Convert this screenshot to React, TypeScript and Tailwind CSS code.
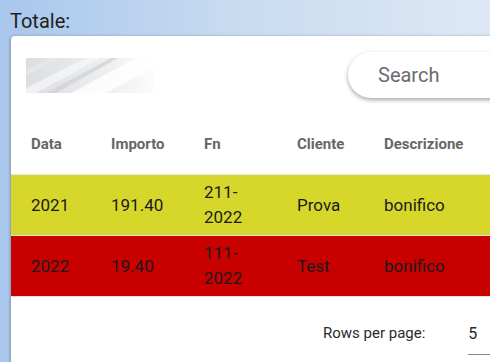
import React from "react";

const rows = [
  { data: "2021", importo: "191.40", fn: "211-2022", cliente: "Prova", descrizione: "bonifico", bg: "bg-[#d7d72b]" },
  { data: "2022", importo: "19.40", fn: "111-2022", cliente: "Test", descrizione: "bonifico", bg: "bg-[#c80000]" },
];

const cols = "grid grid-cols-[80px_93px_93px_87px_1fr]";

const Logo = () => (
  <svg width="127" height="35" viewBox="0 0 127 35">
    <defs>
      <linearGradient id="base" x1="0" y1="0" x2="1" y2="0">
        <stop offset="0" stopColor="#dcdde0" />
        <stop offset="0.6" stopColor="#eceef0" />
        <stop offset="1" stopColor="#fbfbfc" />
      </linearGradient>
    </defs>
    <rect width="127" height="35" fill="url(#base)" />
    <path d="M0 30 L60 0 L75 0 L10 35 L0 35 Z" fill="#f4f5f7" opacity="0.8" />
    <path d="M20 35 L85 0 L92 0 L30 35 Z" fill="#cfd0d3" opacity="0.7" />
    <path d="M45 35 L110 0 L127 0 L127 10 L80 35 Z" fill="#ffffff" opacity="0.8" />
    <path d="M0 12 L25 0 L35 0 L0 18 Z" fill="#e6e7ea" opacity="0.8" />
  </svg>
);

export default function App() {
  return (
    <div className="h-[362px] w-[490px] overflow-hidden bg-gradient-to-r from-[#a9c7ec] via-[#c9dcf1] to-[#dde8f5] font-['Roboto',sans-serif]">
      <div className="pl-[10px] pt-[9px] text-[20px] leading-[24px] text-[#1f1f1f]">Totale:</div>
      <div className="ml-[11px] mt-[3px] w-[560px] h-[330px] bg-white rounded-tl-[4px] shadow-[-1px_0_3px_rgba(0,0,0,0.25)]">
        <div className="flex items-center pl-[15px] pt-[16px] pb-[17px]">
          <Logo />
          <div className="ml-[195px] w-[220px] h-[46px] rounded-full bg-white shadow-[0_2px_4px_rgba(0,0,0,0.35)] flex items-center pl-[30px] text-[20px] text-[#6b6b72]">
            Search
          </div>
        </div>
        <div className={`${cols} h-[60px] items-center border-b border-[#e6e6e6] text-[15px] font-bold text-[#666666]`}>
          <div className="pl-[20px]">Data</div>
          <div className="pl-[20px]">Importo</div>
          <div className="pl-[20px]">Fn</div>
          <div className="pl-[20px]">Cliente</div>
          <div className="pl-[20px]">Descrizione</div>
        </div>
        {rows.map((r) => (
          <div key={r.data} className={`${cols} h-[61px] items-center border-b border-[#e0e0e0] text-[17px] leading-[25px] text-[#1a1a1a] ${r.bg}`}>
            <div className="pl-[20px]">{r.data}</div>
            <div className="pl-[20px]">{r.importo}</div>
            <div className="pl-[20px]">
              <div className="w-[50px]">{r.fn}</div>
            </div>
            <div className="pl-[20px]">{r.cliente}</div>
            <div className="pl-[20px]">{r.descrizione}</div>
          </div>
        ))}
        <div className="flex items-center h-[72px] pl-[312px] text-[15px] text-[#2a2a2a]">
          <span>Rows per page:</span>
          <div className="ml-[43px] mt-[12px] w-[60px] pb-[10px] border-b border-[#8a8a8a] text-[16px] leading-[20px]">5</div>
        </div>
      </div>
    </div>
  );
}
